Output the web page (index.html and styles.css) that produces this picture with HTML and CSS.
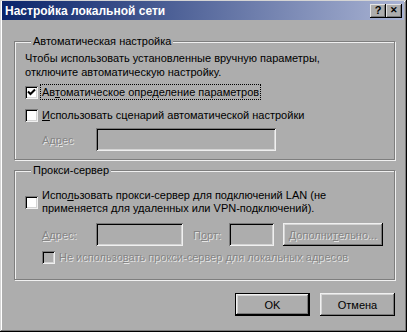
FILE: index.html
```html
<!DOCTYPE html>
<html lang="ru">
<head>
    <meta charset="UTF-8">
    <title>Настройка локальной сети</title>
    <link rel="stylesheet" href="styles.css">
</head>
<body>
    <div class="window">
        <div class="titlebar">
            <span class="title">Настройка локальной сети</span>
            <div class="title-buttons">
                <span class="tbtn">?</span>
                <span class="tbtn close">&#x2715;</span>
            </div>
        </div>

        <div class="content">
            <fieldset class="group group-auto">
                <legend>Автоматическая настройка</legend>
                <p class="hint">Чтобы использовать установленные вручную параметры,<br>отключите автоматическую настройку.</p>

                <div class="check-row first">
                    <span class="box">
                        <svg width="9" height="9" viewBox="0 0 9 9"><path d="M1 3.5 L3.5 6 L8 1.5" fill="none" stroke="#000" stroke-width="2"/></svg>
                    </span>
                    <span class="label focused">Ав<u>т</u>оматическое определение параметров</span>
                </div>

                <div class="check-row">
                    <span class="box"></span>
                    <span class="label"><u>И</u>спользовать сценарий автоматической настройки</span>
                </div>

                <div class="field-row">
                    <span class="field-label disabled">Ад<u>р</u>ес</span>
                    <span class="input wide"></span>
                </div>
            </fieldset>

            <fieldset class="group group-proxy">
                <legend>Прокси-сервер</legend>

                <div class="check-row multi">
                    <span class="box"></span>
                    <span class="label">Испо<u>л</u>ьзовать прокси-сервер для подключений LAN (не<br>применяется для удаленных или VPN-подключений).</span>
                </div>

                <div class="field-row proxy-row">
                    <span class="field-label disabled"><u>А</u>дрес:</span>
                    <span class="input addr"></span>
                    <span class="port-label disabled">П<u>о</u>рт:</span>
                    <span class="input port"></span>
                    <span class="button adv disabled">Дополни<u>т</u>ельно...</span>
                </div>

                <div class="check-row sub">
                    <span class="box off"></span>
                    <span class="label disabled">Не использо<u>в</u>ать прокси-сервер для локальных адресов</span>
                </div>
            </fieldset>

            <div class="actions">
                <span class="button default">OK</span>
                <span class="button">Отмена</span>
            </div>
        </div>
    </div>
</body>
</html>
```

FILE: styles.css
```css
* {
    box-sizing: border-box;
}
body {
    margin: 0;
    font-family: 'Liberation Sans', Arial, sans-serif;
    font-size: 11px;
    color: #000;
    background-color: #adadad;
}
.window {
    width: 407px;
    height: 332px;
    padding: 1px 3px 3px 2px;
    background-color: #adadad;
    box-shadow: inset -1px -1px #000, inset 1px 1px #d4d4d4, inset -2px -2px #7a7a7a, inset 2px 2px #fff;
}
.titlebar {
    height: 19px;
    display: flex;
    align-items: center;
    justify-content: space-between;
    padding: 0 2px 0 3px;
    background: linear-gradient(to right, #0a246a, #a9b3d3);
}
.title {
    color: #fff;
    font-weight: bold;
    font-size: 12px;
}
.title-buttons {
    display: flex;
}
.tbtn {
    width: 16px;
    height: 14px;
    display: flex;
    align-items: center;
    justify-content: center;
    background-color: #adadad;
    font-weight: bold;
    font-size: 11px;
    line-height: 1;
    box-shadow: inset -1px -1px #000, inset 1px 1px #e4e4e4, inset -2px -2px #7a7a7a;
}
.tbtn.close {
    font-size: 9px;
}
.content {
    padding: 14px 9px 0 12px;
}
.group {
    margin: 0;
    padding: 3px 10px 8px 10px;
    border: 1px solid #7e7e7e;
    box-shadow: inset 1px 1px #f0f0f0, 1px 1px #f0f0f0;
}
.group legend {
    margin-left: 6px;
    padding: 0 2px;
    line-height: 14px;
    background-color: #adadad;
}
.group-proxy {
    margin-top: 3px;
    padding-top: 12px;
    padding-bottom: 15px;
}
.hint {
    margin: 0;
    line-height: 14px;
}
.check-row {
    display: flex;
    align-items: center;
    height: 18px;
    margin-top: 5px;
}
.check-row.first {
    margin-top: 4px;
}
.check-row.multi {
    height: 26px;
    margin-top: 0;
    line-height: 13px;
}
.check-row.sub {
    height: 14px;
    margin-top: 4px;
    padding-left: 17px;
}
.box {
    width: 13px;
    height: 13px;
    flex-shrink: 0;
    display: flex;
    align-items: center;
    justify-content: center;
    background-color: #fff;
    box-shadow: inset 1px 1px #7a7a7a, inset -1px -1px #f0f0f0, inset 2px 2px #000, inset -2px -2px #d4d4d4;
}
.box.off {
    background-color: #adadad;
}
.label {
    margin-left: 3px;
    padding: 1px 1px;
}
.label.focused {
    outline: 1px dotted #000;
    outline-offset: 0;
}
.disabled {
    color: #858585;
    text-shadow: 1px 1px #e6e6e6;
}
.field-row {
    display: flex;
    align-items: center;
    margin-top: 4px;
    padding-left: 17px;
}
.field-label {
    width: 54px;
}
.input {
    height: 23px;
    background-color: #adadad;
    box-shadow: inset 1px 1px #7a7a7a, inset -1px -1px #f0f0f0, inset 2px 2px #000, inset -2px -2px #d4d4d4;
}
.input.wide {
    width: 180px;
}
.proxy-row {
    margin-top: 8px;
}
.input.addr {
    width: 87px;
}
.input.port {
    width: 45px;
}
.port-label {
    width: 36px;
    margin-left: 10px;
}
.button {
    height: 23px;
    display: flex;
    align-items: center;
    justify-content: center;
    background-color: #adadad;
    box-shadow: inset -1px -1px #000, inset 1px 1px #f0f0f0, inset -2px -2px #7a7a7a, inset 2px 2px #d4d4d4;
}
.button.adv {
    width: 100px;
    margin-left: 9px;
}
.actions {
    display: flex;
    justify-content: flex-end;
    gap: 10px;
    margin-top: 13px;
}
.actions .button {
    width: 75px;
}
.button.default {
    border: 1px solid #000;
}
```
